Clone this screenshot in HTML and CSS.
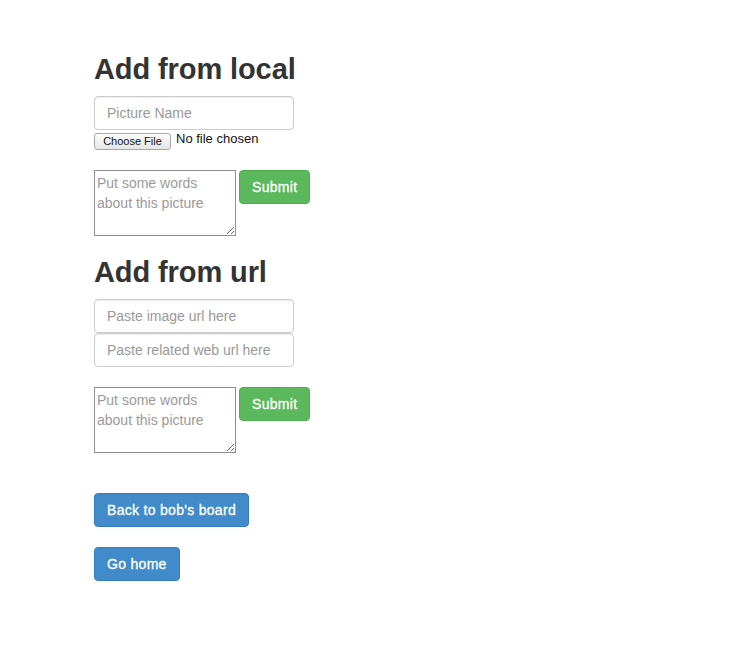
FILE: index.html
```html
<!DOCTYPE html>
<html>
<head>
<meta charset="utf-8">
<title>Add picture</title>
<link rel="stylesheet" href="styles.css">
</head>
<body>
<div class="page">
  <section class="section">
    <h2 class="title">Add from local</h2>
    <input class="field" type="text" placeholder="Picture Name">
    <div class="file-line">
      <span class="file-btn">Choose File</span>
      <span class="file-text">No file chosen</span>
    </div>
    <div class="note-row">
      <textarea class="note" placeholder="Put some words about this picture"></textarea>
      <button class="btn btn-success">Submit</button>
    </div>
  </section>
  <section class="section">
    <h2 class="title">Add from url</h2>
    <input class="field" type="text" placeholder="Paste image url here">
    <input class="field" type="text" placeholder="Paste related web url here">
    <div class="note-row">
      <textarea class="note" placeholder="Put some words about this picture"></textarea>
      <button class="btn btn-success">Submit</button>
    </div>
  </section>
  <div class="nav">
    <a class="btn btn-primary" href="#">Back to bob's board</a>
    <a class="btn btn-primary" href="#">Go home</a>
  </div>
</div>
</body>
</html>
```
FILE: styles.css
```css
html, body {
  margin: 0;
  padding: 0;
  background: #fff;
}
body {
  font-family: "Liberation Sans", Arial, Helvetica, sans-serif;
  font-size: 14px;
  line-height: 1.428571;
  color: #333;
}
.page {
  padding: 33px 0 0 94px;
  display: flex;
  flex-direction: column;
  align-items: flex-start;
}
.section {
  display: flex;
  flex-direction: column;
  align-items: flex-start;
}
.title {
  font-size: 29px;
  font-weight: 700;
  line-height: 33px;
  margin: 20px 0 10px;
  color: #333;
  letter-spacing: -0.1px;
}
.field {
  box-sizing: border-box;
  display: block;
  width: 200px;
  height: 34px;
  padding: 6px 12px;
  font: 14px/20px "Liberation Sans", Arial, sans-serif;
  color: #555;
  background: #fff;
  border: 1px solid #ccc;
  border-radius: 4px;
  box-shadow: inset 0 1px 1px rgba(0,0,0,.075);
  margin: 0;
  outline: none;
}
.field::placeholder {
  color: #999;
}
.file-line {
  display: flex;
  align-items: center;
  gap: 5px;
  margin-top: 3px;
  height: 17px;
}
.file-btn {
  box-sizing: border-box;
  display: inline-block;
  height: 17px;
  width: 77px;
  text-align: center;
  font: 11px/15px "Liberation Sans", Arial, sans-serif;
  color: #111;
  border: 1px solid #a8a8a8;
  border-radius: 3px;
  background: linear-gradient(#fdfdfd, #e6e6e6);
}
.file-text {
  font: 13px/16px "Liberation Sans", Arial, sans-serif;
  color: #111;
  position: relative;
  top: -3px;
}
.note-row {
  display: flex;
  align-items: flex-start;
  gap: 3px;
  margin-top: 20px;
}
.note {
  box-sizing: border-box;
  width: 142px;
  height: 66px;
  margin: 0;
  padding: 2px;
  font: 14px/20px "Liberation Sans", Arial, sans-serif;
  color: #333;
  border: 1px solid #8f8f8f;
  resize: vertical;
  border-radius: 0;
  outline: none;
}
.note::placeholder {
  color: #9a9a9a;
}
.btn {
  box-sizing: border-box;
  display: inline-block;
  height: 34px;
  padding: 6px 12px;
  font: 14px/20px "Liberation Sans", Arial, sans-serif;
  letter-spacing: 0.3px;
  -webkit-text-stroke: 0.3px #fff;
  border: 1px solid transparent;
  border-radius: 4px;
  color: #fff;
  text-decoration: none;
  cursor: pointer;
  white-space: nowrap;
}
.btn-success {
  background: #5cb85c;
  border-color: #4cae4c;
}
.btn-primary {
  background: #428bca;
  border-color: #357ebd;
}
.nav {
  display: flex;
  flex-direction: column;
  align-items: flex-start;
  gap: 20px;
  margin-top: 40px;
}
```
